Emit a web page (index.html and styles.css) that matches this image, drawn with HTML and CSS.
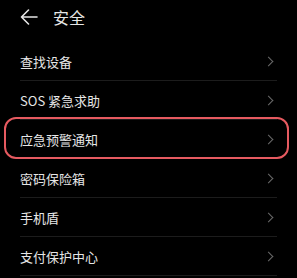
FILE: index.html
```html
<!DOCTYPE html>
<html lang="zh-CN">

<head>
    <meta charset="UTF-8">
    <meta name="viewport" content="width=device-width, initial-scale=1.0">
    <title>安全</title>
    <link rel="stylesheet" href="styles.css">
</head>

<body>
    <div class="header">
        <a href="javascript:;" class="back">
            <svg width="18" height="16" viewBox="0 0 18 16">
                <path d="M17 8H1.5M8.5 1L1.5 8l7 7" fill="none" stroke="#e6e6e6" stroke-width="1.6" stroke-linecap="round" stroke-linejoin="round"/>
            </svg>
        </a>
        <h1 class="title">安全</h1>
    </div>
    <ul class="list">
        <li class="row"><span>查找设备</span><i class="chev"></i></li>
        <li class="row"><span>SOS 紧急求助</span><i class="chev"></i></li>
        <li class="row hot"><span>应急预警通知</span><i class="chev"></i></li>
        <li class="row"><span>密码保险箱</span><i class="chev"></i></li>
        <li class="row"><span>手机盾</span><i class="chev"></i></li>
        <li class="row"><span>支付保护中心</span><i class="chev"></i></li>
    </ul>
</body>

</html>
```
FILE: styles.css
```css
* {
    margin: 0;
    padding: 0;
}

ul {
    list-style: none;
}

html,
body {
    background-color: #000;
}

body {
    width: 297px;
    height: 278px;
    overflow: hidden;
    position: relative;
    color: #e6e6e6;
    font-family: "Noto Sans CJK SC", "Noto Sans", sans-serif;
}

.header {
    display: flex;
    align-items: center;
    height: 18px;
    padding: 8px 0 16px 20px;
}

.back {
    display: flex;
    width: 18px;
    height: 16px;
}

.title {
    margin-left: 15px;
    font-size: 16px;
    font-weight: normal;
    line-height: 18px;
}

.list {
    margin: 0 20px;
}

.row {
    position: relative;
    display: flex;
    justify-content: space-between;
    align-items: center;
    height: 38px;
    border-bottom: 1px solid #1c1c1c;
    font-size: 13px;
    line-height: 18px;
}

.row span {
    padding-top: 2px;
}

.chev {
    width: 6px;
    height: 6px;
    margin-right: 5px;
    border-top: 1.5px solid #6a6a6a;
    border-right: 1.5px solid #6a6a6a;
    transform: rotate(45deg);
}

.hot::after {
    content: "";
    position: absolute;
    left: -16px;
    right: -12px;
    top: -3px;
    bottom: -1px;
    border: 2.5px solid #e65a60;
    border-radius: 12px;
}
```
